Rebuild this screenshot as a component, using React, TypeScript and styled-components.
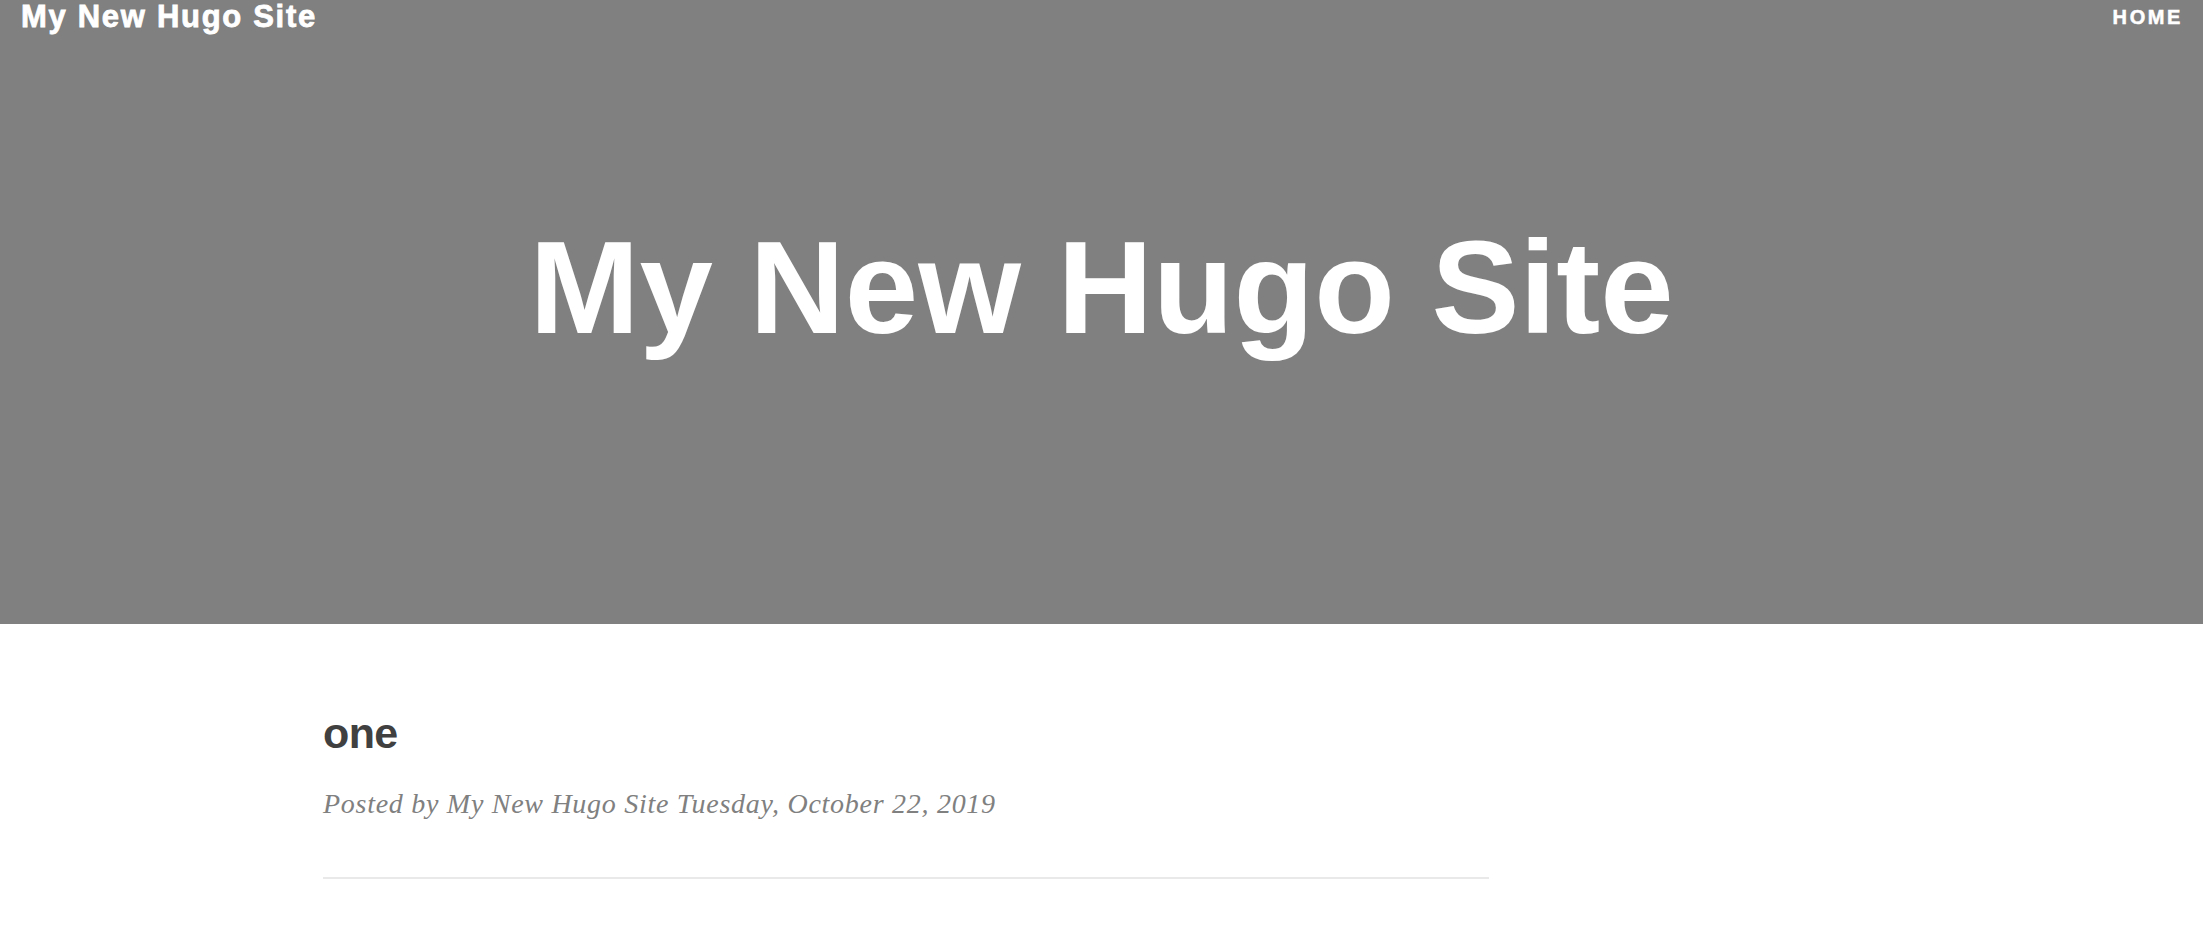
import React from "react";
import styled, { createGlobalStyle } from "styled-components";

const GlobalStyle = createGlobalStyle`
  html, body {
    margin: 0;
    padding: 0;
    background: #ffffff;
  }
  body {
    font-family: "Liberation Sans", Arial, sans-serif;
    color: #404040;
  }
`;

const Header = styled.header`
  height: 624px;
  background: #808080;
  display: flex;
  flex-direction: column;
`;

const Nav = styled.nav`
  display: flex;
  justify-content: space-between;
  align-items: flex-start;
  padding: 0 20px 0 21px;
`;

const Brand = styled.a`
  margin-top: 1px;
  font-family: "Liberation Sans", Arial, sans-serif;
  font-weight: 800;
  font-size: 31px;
  line-height: 31px;
  letter-spacing: 1.7px;
  color: #ffffff;
  text-decoration: none;
  -webkit-text-stroke: 0.8px #ffffff;
`;

const NavLink = styled.a`
  margin-top: 7px;
  font-family: "Liberation Sans", Arial, sans-serif;
  font-weight: 800;
  font-size: 20px;
  line-height: 20px;
  letter-spacing: 2.6px;
  text-transform: uppercase;
  color: #ffffff;
  text-decoration: none;
  -webkit-text-stroke: 0.5px #ffffff;
`;

const SiteHeading = styled.div`
  margin-top: 183px;
  text-align: center;
`;

const SiteTitle = styled.h1`
  margin: 0;
  font-family: "Liberation Sans", Arial, sans-serif;
  font-weight: 700;
  font-size: 132px;
  line-height: 145px;
  color: #ffffff;
`;

const Main = styled.main`
  width: 1166px;
  margin-left: 323px;
  padding-top: 83px;
`;

const PostTitle = styled.h2`
  margin: 0;
  font-family: "Liberation Sans", Arial, sans-serif;
  font-weight: 700;
  font-size: 43px;
  line-height: 52px;
  letter-spacing: -0.6px;
  color: #404040;
`;

const PostMeta = styled.p`
  margin: 28px 0 0;
  font-family: "Liberation Serif", "Times New Roman", serif;
  font-style: italic;
  font-size: 28px;
  line-height: 34px;
  letter-spacing: 0.72px;
  color: #808080;
`;

const Divider = styled.hr`
  margin: 56px 0 0;
  border: 0;
  height: 2px;
  background: #e9e9e9;
`;

export default function App() {
  return (
    <>
      <GlobalStyle />
      <Header>
        <Nav>
          <Brand href="#">My New Hugo Site</Brand>
          <NavLink href="#">Home</NavLink>
        </Nav>
        <SiteHeading>
          <SiteTitle>My New Hugo Site</SiteTitle>
        </SiteHeading>
      </Header>
      <Main>
        <PostTitle>one</PostTitle>
        <PostMeta>Posted by My New Hugo Site Tuesday, October 22, 2019</PostMeta>
        <Divider />
      </Main>
    </>
  );
}
